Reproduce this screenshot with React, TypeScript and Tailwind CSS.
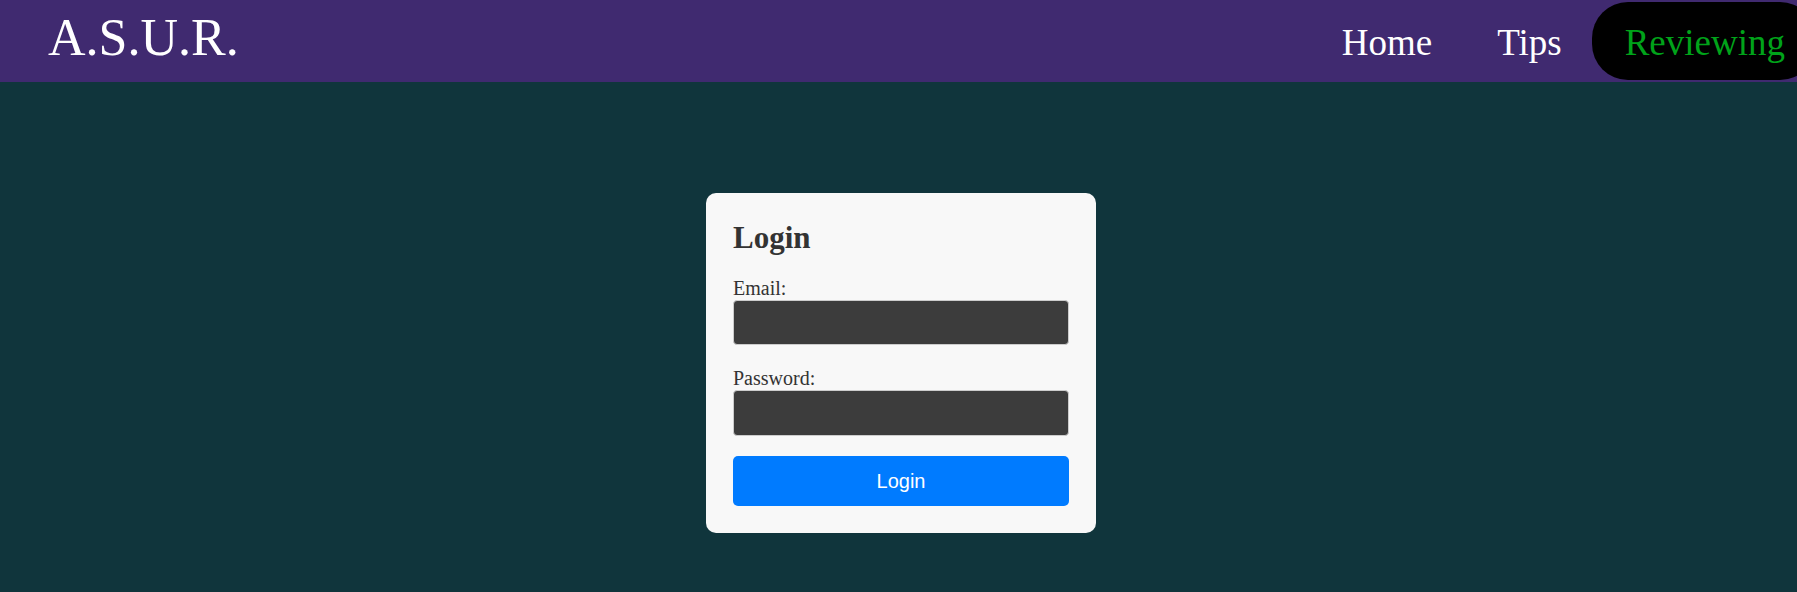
import React from 'react';

const App: React.FC = () => {
  return (
    <div className="min-h-[592px] bg-[#10353c] font-['Liberation_Serif',serif] overflow-hidden">
      {/* Header */}
      <header className="h-[82px] bg-[#402a70] flex items-center justify-between pl-[48px] overflow-hidden">
        <div className="text-white text-[52px] leading-none mb-[6px]">A.S.U.R.</div>
        <nav className="flex items-center text-[37px] leading-none -mr-[19px]">
          <a className="text-white px-[33px] mt-[3px]">Home</a>
          <a className="text-white pl-[32px] pr-[30px] mt-[3px]">Tips</a>
          <a className="bg-black text-[#00a31a] h-[78px] mt-[-1px] rounded-[36px] pl-[33px] pr-[31px] pt-[3px] flex items-center">Reviewing</a>
        </nav>
      </header>

      {/* Login card */}
      <main className="flex justify-center pt-[111px]">
        <div className="w-[390px] ml-[5px] bg-[#f8f8f8] rounded-[10px] p-[27px] text-[#333]">
          <h2 className="text-[31px] font-bold leading-[1.15] mb-[21px]">Login</h2>
          <label className="block text-[20px] leading-[23px]">Email:</label>
          <input type="email" className="block w-full h-[45px] mb-[22px] bg-[#3c3c3c] border border-[#ccc] rounded-[4px]" />
          <label className="block text-[20px] leading-[23px]">Password:</label>
          <input type="password" className="block w-full h-[46px] mb-[20px] bg-[#3c3c3c] border border-[#ccc] rounded-[4px]" />
          <button className="w-full h-[50px] bg-[#007bff] text-white rounded-[5px] text-[20px] font-['Liberation_Sans',sans-serif]">
            Login
          </button>
        </div>
      </main>
    </div>
  );
};

export default App;
